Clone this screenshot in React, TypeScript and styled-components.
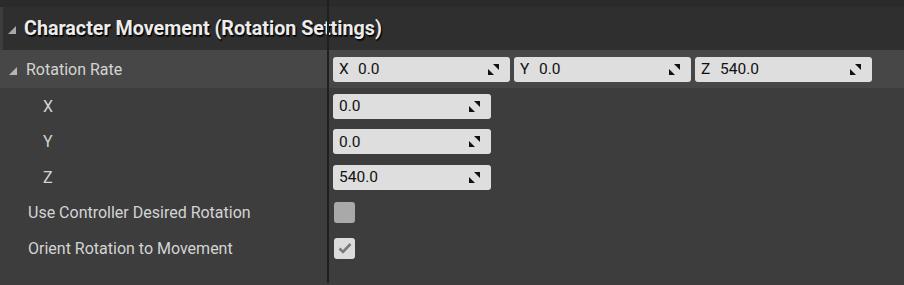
import React from "react";
import styled, { createGlobalStyle } from "styled-components";

const GlobalStyle = createGlobalStyle`
  html, body {
    margin: 0;
    padding: 0;
    background: #3d3d3d;
  }
  body {
    font-family: Roboto, "Liberation Sans", sans-serif;
  }
`;

const Panel = styled.div`
  position: relative;
  width: 904px;
  height: 285px;
  overflow: hidden;
  background: #3d3d3d;
  padding-top: 7px;
  box-sizing: border-box;
  &::before {
    content: "";
    position: absolute;
    left: 0;
    top: 0;
    right: 0;
    height: 7px;
    background: #2b2b2b;
  }
`;

// splitter line drawn over every row
const Splitter = styled.div`
  position: absolute;
  left: 327px;
  top: 0;
  width: 2px;
  height: 283px;
  background: #1f1f1f;
  z-index: 2;
`;

const CategoryHeader = styled.div`
  height: 43px;
  margin-left: 3px;
  background: #2f2f2f;
  display: flex;
  align-items: center;
  padding-left: 5px;
  gap: 8px;
  color: #ececec;
  font-weight: 700;
  font-size: 19.7px;
  text-shadow: 1px 1px 1px #000, 1px 2px 1px rgba(0, 0, 0, 0.6);
`;

const Arrow = styled.span<{ $size: number; $color: string }>`
  display: inline-block;
  width: 0;
  height: 0;
  border-style: solid;
  border-width: 0 0 ${({ $size }) => $size}px ${({ $size }) => $size}px;
  border-color: transparent transparent ${({ $color }) => $color} transparent;
  margin-top: 3px;
`;

const Row = styled.div<{ $height: number; $highlight?: boolean }>`
  display: grid;
  grid-template-columns: 333px 1fr;
  height: ${({ $height }) => $height}px;
  background: ${({ $highlight }) => ($highlight ? "#474747" : "#3d3d3d")};
  align-items: center;
`;

const NameCell = styled.div<{ $indent: number }>`
  display: flex;
  align-items: center;
  gap: 9px;
  padding-left: ${({ $indent }) => $indent}px;
  color: #d4d4d4;
  font-size: 16px;
`;

const ValueCell = styled.div`
  display: flex;
  align-items: center;
  gap: 4px;
`;

const NumberBox = styled.div<{ $width: number }>`
  position: relative;
  width: ${({ $width }) => $width}px;
  height: 25px;
  box-sizing: border-box;
  background: #dedede;
  border-radius: 3px;
  display: flex;
  align-items: center;
  padding-left: 6px;
  color: #111;
  font-size: 15.5px;
`;

const AxisLabel = styled.span`
  width: 19px;
`;

const SpinIcon = styled.svg`
  position: absolute;
  right: 10px;
  top: 6px;
`;

const CheckBox = styled.div<{ $checked?: boolean }>`
  width: 21px;
  height: 21px;
  margin-left: 1px;
  border-radius: 3px;
  background: ${({ $checked }) => ($checked ? "#dcdcdc" : "#a9a9a9")};
  display: flex;
  align-items: center;
  justify-content: center;
`;

function Spinner() {
  return (
    <SpinIcon width="13" height="13" viewBox="0 0 13 13">
      <polygon points="6,1 12,1 12,7" fill="#111" />
      <polygon points="1,6 7,12 1,12" fill="#111" />
    </SpinIcon>
  );
}

function NumField({ axis, value, width }: { axis?: string; value: string; width: number }) {
  return (
    <NumberBox $width={width}>
      {axis && <AxisLabel>{axis}</AxisLabel>}
      <span>{value}</span>
      <Spinner />
    </NumberBox>
  );
}

function App() {
  return (
    <React.Fragment>
      <GlobalStyle />
      <Panel>
        <CategoryHeader>
          <Arrow $size={8} $color="#a8a8a8" />
          <span>Character Movement (Rotation Settings)</span>
        </CategoryHeader>
        <Row $height={38} $highlight>
          <NameCell $indent={9}>
            <Arrow $size={8} $color="#b5b5b5" />
            <span>Rotation Rate</span>
          </NameCell>
          <ValueCell>
            <NumField axis="X" value="0.0" width={177} />
            <NumField axis="Y" value="0.0" width={177} />
            <NumField axis="Z" value="540.0" width={177} />
          </ValueCell>
        </Row>
        <Row $height={36}>
          <NameCell $indent={43}>X</NameCell>
          <ValueCell>
            <NumField value="0.0" width={158} />
          </ValueCell>
        </Row>
        <Row $height={35}>
          <NameCell $indent={43}>Y</NameCell>
          <ValueCell>
            <NumField value="0.0" width={158} />
          </ValueCell>
        </Row>
        <Row $height={36}>
          <NameCell $indent={43}>Z</NameCell>
          <ValueCell>
            <NumField value="540.0" width={158} />
          </ValueCell>
        </Row>
        <Row $height={35}>
          <NameCell $indent={28}>Use Controller Desired Rotation</NameCell>
          <ValueCell>
            <CheckBox />
          </ValueCell>
        </Row>
        <Row $height={36}>
          <NameCell $indent={28}>Orient Rotation to Movement</NameCell>
          <ValueCell>
            <CheckBox $checked>
              <svg width="14" height="12" viewBox="0 0 14 12">
                <path d="M1.5 6.5 L5 10 L12.5 2" stroke="#7a7a7a" strokeWidth="2.6" fill="none" />
              </svg>
            </CheckBox>
          </ValueCell>
        </Row>
        <Splitter />
      </Panel>
    </React.Fragment>
  );
}

export default App;
